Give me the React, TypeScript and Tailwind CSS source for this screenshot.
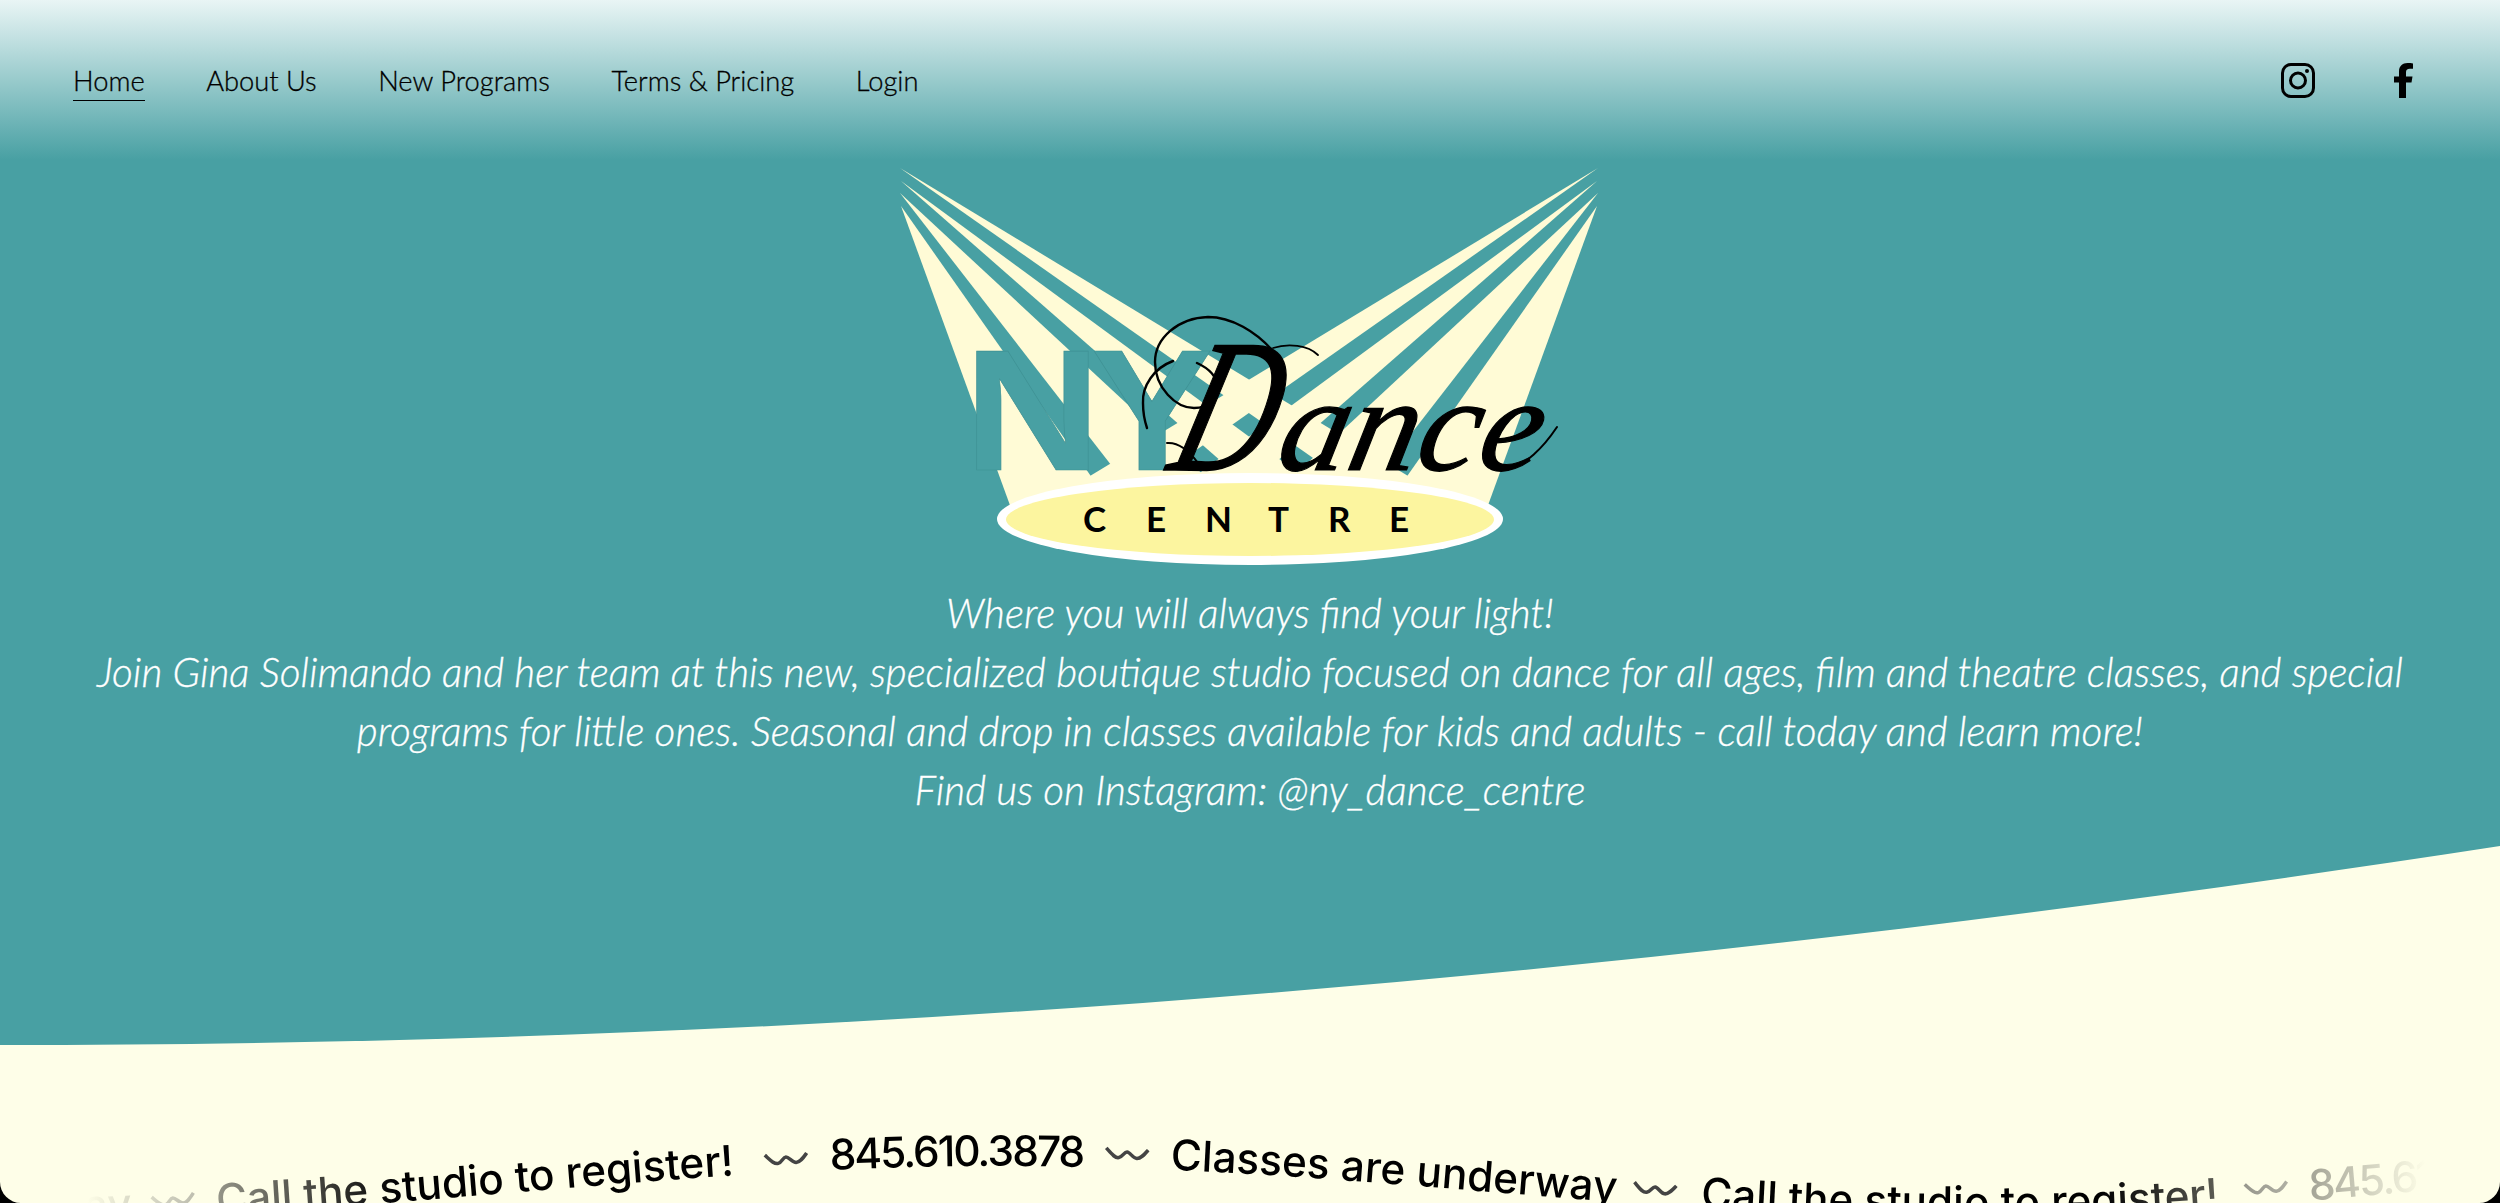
import React from "react";

const NAV_LINKS = ["Home", "About Us", "New Programs", "Terms & Pricing", "Login"];

// left hand beams of the logo, the right hand ones are mirrored around x=1249
const BEAMS = [
  "900,168 1479,519 1400,519",
  "901,181 1361,519 1287,519",
  "900,193 1251,519 1153,519",
  "901,206 1121,519 1015,519",
];

const RIPPLE = "M-21 -5C-16 0 -12 5 -8 4C-4 3 -3 -2 0 -2C3 -2 6 4 10 4C14 4 17 0 21 -5";

function Logo() {
  const nyFont = "font-['Liberation_Sans',sans-serif] font-bold text-[172px]";
  return (
    <svg viewBox="880 160 740 420" className="block mx-auto w-[740px] h-[420px]">
      <defs>
        <clipPath id="rightBeams">
          <g transform="matrix(-1 0 0 1 2498 0)">
            {BEAMS.map((p) => (
              <polygon key={p} points={p} />
            ))}
          </g>
        </clipPath>
      </defs>
      {BEAMS.map((p) => (
        <polygon key={p} points={p} fill="#fffbd6" />
      ))}
      <g transform="matrix(-1 0 0 1 2498 0)">
        {BEAMS.map((p) => (
          <polygon key={p} points={p} fill="#fffbd6" />
        ))}
      </g>
      <g clipPath="url(#rightBeams)">
        {BEAMS.map((p) => (
          <polygon key={p} points={p} fill="#fdf6a6" />
        ))}
      </g>
      <g fill="#48a0a3" stroke="#3f9194" strokeWidth="0.6">
        <text x="964" y="470" textLength="137" lengthAdjust="spacingAndGlyphs" className={nyFont}>
          N
        </text>
        <text x="1091" y="470" textLength="122" lengthAdjust="spacingAndGlyphs" className={nyFont}>
          Y
        </text>
      </g>
      <ellipse cx="1250" cy="519" rx="253" ry="46" fill="#ffffff" />
      <ellipse cx="1250" cy="519.5" rx="244" ry="36.5" fill="#fcf59f" />
      <text
        x="1083 1146 1205 1268 1328 1389"
        y="532"
        fill="#000000"
        className="font-['Lato',sans-serif] font-bold text-[35px]"
      >
        CENTRE
      </text>
      <g className="font-['Liberation_Serif',serif] italic" fill="#000000" stroke="#000000">
        <text transform="translate(1165 470) skewX(-16) scale(0.72 1)" strokeWidth="1.5" className="text-[190px]">
          D
        </text>
        <text
          transform="translate(1274 470) skewX(-12)"
          textLength="262"
          lengthAdjust="spacingAndGlyphs"
          strokeWidth="1.2"
          className="text-[134px]"
        >
          ance
        </text>
      </g>
      <g fill="none" stroke="#000000" strokeLinecap="round">
        <path
          d="M1272 350C1256 332 1232 317 1208 317C1178 318 1155 338 1155 362C1155 388 1176 408 1194 408C1210 408 1217 398 1217 387C1217 376 1208 368 1197 363"
          strokeWidth="2.4"
        />
        <path d="M1173 361C1154 368 1142 386 1143 403C1143 414 1145 422 1147 428" strokeWidth="2.4" />
        <path d="M1273 348C1288 343 1308 345 1318 355" strokeWidth="1.8" />
        <path d="M1167 443C1180 442 1190 452 1198 463" strokeWidth="2" />
        <path d="M1503 470C1525 468 1545 445 1557 427" strokeWidth="2" />
      </g>
    </svg>
  );
}

function Ticker() {
  const ripples = [
    [173, 1200, -6],
    [786, 1159, -3],
    [1127, 1154, 3],
    [1655, 1189, 5],
    [2266, 1188, -4],
  ];
  return (
    <svg viewBox="0 1045 2500 158" className="block w-full h-[158px]">
      <defs>
        <path
          id="tickerPath"
          d="M-40 1222C350 1222 650 1166 1000 1166C1350 1166 1600 1215 1960 1217C2300 1220 2400 1170 2960 1170"
        />
        <linearGradient id="tickerFade" gradientUnits="userSpaceOnUse" x1="0" y1="0" x2="2500" y2="0">
          <stop offset="0.035" stopColor="#000" />
          <stop offset="0.16" stopColor="#fff" />
          <stop offset="0.84" stopColor="#fff" />
          <stop offset="0.97" stopColor="#000" />
        </linearGradient>
        <mask id="tickerMask" maskUnits="userSpaceOnUse" x="0" y="1045" width="2500" height="158">
          <rect x="0" y="1045" width="2500" height="158" fill="url(#tickerFade)" />
        </mask>
      </defs>
      <g mask="url(#tickerMask)">
        <g fill="#000000" className="font-['Inter',sans-serif] font-medium text-[42.3px]">
          <text textAnchor="end">
            <textPath href="#tickerPath" startOffset="172">
              Classes are underway
            </textPath>
          </text>
          <text>
            <textPath href="#tickerPath" startOffset="257">
              Call the studio to register!
            </textPath>
          </text>
          <text className="tracking-[-2px]">
            <textPath href="#tickerPath" startOffset="872">
              845.610.3878
            </textPath>
          </text>
          <text>
            <textPath href="#tickerPath" startOffset="1212">
              Classes are underway
            </textPath>
          </text>
          <text>
            <textPath href="#tickerPath" startOffset="1744">
              Call the studio to register!
            </textPath>
          </text>
          <text className="tracking-[-2px]">
            <textPath href="#tickerPath" startOffset="2354">
              845.610.3878
            </textPath>
          </text>
        </g>
        {ripples.map(([x, y, r]) => (
          <path
            key={x}
            d={RIPPLE}
            transform={`translate(${x} ${y}) rotate(${r})`}
            fill="none"
            stroke="#444444"
            strokeWidth="3.5"
          />
        ))}
      </g>
    </svg>
  );
}

export default function App() {
  return (
    <div className="w-full h-[1203px] bg-black overflow-hidden">
      <div className="h-full rounded-b-[21px] overflow-hidden bg-[#fefee8]">
        <section className="h-[846px] bg-[#48a0a3]">
          <header className="h-[160px] px-[73px] flex items-start justify-between bg-linear-to-b/srgb from-[#e9f5f5] to-[#48a0a3]">
            <nav className="flex gap-[61.5px] pt-[62px] font-['Lato',sans-serif] font-light text-[27.3px] leading-[38px] text-black [-webkit-text-stroke:0.3px_black]">
              {NAV_LINKS.map((label, i) => (
                <a key={label} href="#" className={i === 0 ? "border-b border-black h-[39px]" : "h-[39px]"}>
                  {label}
                </a>
              ))}
            </nav>
            <div className="flex items-center gap-[79px] pt-[63px] pr-[14px]">
              <svg viewBox="0 0 34 35" className="w-[34px] h-[35px]" fill="none" stroke="#000000" strokeWidth="3">
                <rect x="1.5" y="1.5" width="31" height="32" rx="8.5" />
                <circle cx="17" cy="17.5" r="7.5" />
                <circle cx="26" cy="8" r="2" fill="#000000" stroke="none" />
              </svg>
              <svg viewBox="0 0 19 35" className="w-[19px] h-[35px]" fill="#000000">
                <path d="M5 35V19.5H0V13.5H5V8.5C5 3 8.5 0 13.5 0C15.5 0 17.5 .2 19 .4V5.8H15.8C13 5.8 12 7.2 12 9.2V13.5H18.5L17.5 19.5H12V35Z" />
              </svg>
            </div>
          </header>
          <Logo />
          <p className="mt-[3px] px-[90px] text-center text-white font-['Lato',sans-serif] font-light italic text-[40.5px] leading-[59px] [-webkit-text-stroke:0.3px_white]">
            Where you will always find your light!
            <br />
            Join Gina Solimando and her team at this new, specialized boutique studio focused on dance for all ages, film and theatre classes, and special programs for little ones. Seasonal and drop in classes available for kids and adults - call today and learn more!
            <br />
            Find us on Instagram: @ny_dance_centre
          </p>
        </section>
        <svg viewBox="0 846 2500 199" className="block w-full h-[199px]">
          <path d="M0 846H2500C1500 1000 700 1045 0 1045Z" fill="#48a0a3" />
        </svg>
        <Ticker />
      </div>
    </div>
  );
}
